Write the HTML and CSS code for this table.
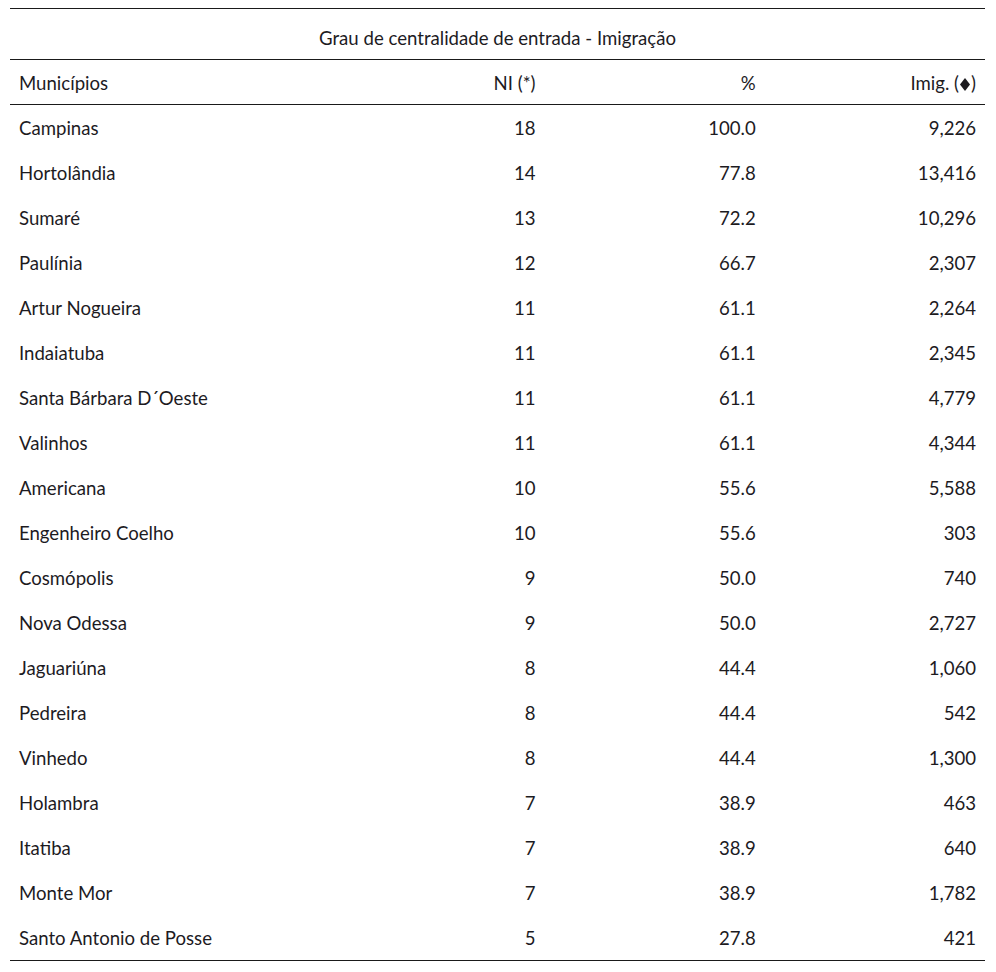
FILE: index.html
```html
<!DOCTYPE html>
<html lang="pt">
<head>
<meta charset="utf-8">
<title>Grau de centralidade de entrada - Imigração</title>
<link rel="stylesheet" href="styles.css">
</head>
<body>
<table class="data">
  <colgroup>
    <col class="c-name">
    <col class="c-num">
    <col class="c-num">
    <col class="c-num">
  </colgroup>
  <thead>
    <tr class="title-row"><th colspan="4">Grau de centralidade de entrada - Imigração</th></tr>
    <tr class="head-row">
      <th class="left">Municípios</th>
      <th class="right">NI (*)</th>
      <th class="right">%</th>
      <th class="right">Imig. (<svg class="diamond" viewBox="0 0 10 13" width="10" height="13" aria-label="♦"><polygon points="5,0 10,6.5 5,13 0,6.5" fill="#1d1b1f"/></svg>)</th>
    </tr>
  </thead>
  <tbody>
    <tr><td>Campinas</td><td>18</td><td>100.0</td><td>9,226</td></tr>
    <tr><td>Hortolândia</td><td>14</td><td>77.8</td><td>13,416</td></tr>
    <tr><td>Sumaré</td><td>13</td><td>72.2</td><td>10,296</td></tr>
    <tr><td>Paulínia</td><td>12</td><td>66.7</td><td>2,307</td></tr>
    <tr><td>Artur Nogueira</td><td>11</td><td>61.1</td><td>2,264</td></tr>
    <tr><td>Indaiatuba</td><td>11</td><td>61.1</td><td>2,345</td></tr>
    <tr><td>Santa Bárbara D´Oeste</td><td>11</td><td>61.1</td><td>4,779</td></tr>
    <tr><td>Valinhos</td><td>11</td><td>61.1</td><td>4,344</td></tr>
    <tr><td>Americana</td><td>10</td><td>55.6</td><td>5,588</td></tr>
    <tr><td>Engenheiro Coelho</td><td>10</td><td>55.6</td><td>303</td></tr>
    <tr><td>Cosmópolis</td><td>9</td><td>50.0</td><td>740</td></tr>
    <tr><td>Nova Odessa</td><td>9</td><td>50.0</td><td>2,727</td></tr>
    <tr><td>Jaguariúna</td><td>8</td><td>44.4</td><td>1,060</td></tr>
    <tr><td>Pedreira</td><td>8</td><td>44.4</td><td>542</td></tr>
    <tr><td>Vinhedo</td><td>8</td><td>44.4</td><td>1,300</td></tr>
    <tr><td>Holambra</td><td>7</td><td>38.9</td><td>463</td></tr>
    <tr><td>Itatiba</td><td>7</td><td>38.9</td><td>640</td></tr>
    <tr><td>Monte Mor</td><td>7</td><td>38.9</td><td>1,782</td></tr>
    <tr><td>Santo Antonio de Posse</td><td>5</td><td>27.8</td><td>421</td></tr>
  </tbody>
</table>
</body>
</html>
```

FILE: styles.css
```css
html, body {
  margin: 0;
  padding: 0;
  background: #ffffff;
}

body {
  padding: 8px 11px 0 10px;
  font-family: "Lato", "Liberation Sans", sans-serif;
  font-size: 18.6px;
  line-height: 22px;
  color: #1d1b1f;
}

.data {
  width: 975px;
  border-collapse: collapse;
  table-layout: fixed;
  border-top: 1.5px solid #1a1a1a;
  border-bottom: 1.5px solid #1a1a1a;
}

.c-name { width: 314px; }
.c-num { width: 220px; }

.data th,
.data td {
  padding: 12px 9px 11px;
  font-weight: normal;
  white-space: nowrap;
}

.title-row th {
  text-align: center;
  border-bottom: 1.5px solid #1a1a1a;
  padding-top: 18px;
  padding-bottom: 10px;
}

.head-row th {
  border-bottom: 1.5px solid #1a1a1a;
  padding-top: 12px;
  padding-bottom: 10px;
}

.left { text-align: left; }
.right { text-align: right; }

.diamond {
  display: inline-block;
  vertical-align: -1px;
  margin: 0 1px;
}

.data tbody td {
  text-align: right;
}

.data tbody td:first-child {
  text-align: left;
}
```
